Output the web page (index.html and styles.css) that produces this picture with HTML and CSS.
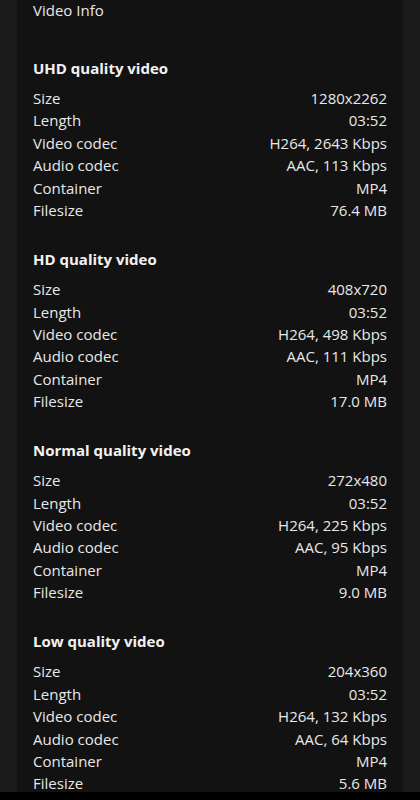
FILE: index.html
```html
<!DOCTYPE html>
<html lang="en">
<head>
<meta charset="utf-8">
<title>Video Info</title>
<link rel="stylesheet" href="styles.css">
</head>
<body>
<div class="page">
  <main class="panel">
    <div class="title">Video Info</div>

    <section class="group">
      <h2 class="heading">UHD quality video</h2>
      <dl class="rows">
        <dt>Size</dt><dd>1280x2262</dd>
        <dt>Length</dt><dd>03:52</dd>
        <dt>Video codec</dt><dd>H264, 2643 Kbps</dd>
        <dt>Audio codec</dt><dd>AAC, 113 Kbps</dd>
        <dt>Container</dt><dd>MP4</dd>
        <dt>Filesize</dt><dd>76.4 MB</dd>
      </dl>
    </section>

    <section class="group">
      <h2 class="heading">HD quality video</h2>
      <dl class="rows">
        <dt>Size</dt><dd>408x720</dd>
        <dt>Length</dt><dd>03:52</dd>
        <dt>Video codec</dt><dd>H264, 498 Kbps</dd>
        <dt>Audio codec</dt><dd>AAC, 111 Kbps</dd>
        <dt>Container</dt><dd>MP4</dd>
        <dt>Filesize</dt><dd>17.0 MB</dd>
      </dl>
    </section>

    <section class="group">
      <h2 class="heading">Normal quality video</h2>
      <dl class="rows">
        <dt>Size</dt><dd>272x480</dd>
        <dt>Length</dt><dd>03:52</dd>
        <dt>Video codec</dt><dd>H264, 225 Kbps</dd>
        <dt>Audio codec</dt><dd>AAC, 95 Kbps</dd>
        <dt>Container</dt><dd>MP4</dd>
        <dt>Filesize</dt><dd>9.0 MB</dd>
      </dl>
    </section>

    <section class="group">
      <h2 class="heading">Low quality video</h2>
      <dl class="rows">
        <dt>Size</dt><dd>204x360</dd>
        <dt>Length</dt><dd>03:52</dd>
        <dt>Video codec</dt><dd>H264, 132 Kbps</dd>
        <dt>Audio codec</dt><dd>AAC, 64 Kbps</dd>
        <dt>Container</dt><dd>MP4</dd>
        <dt>Filesize</dt><dd>5.6 MB</dd>
      </dl>
    </section>
  </main>
</div>
<div class="navbar"></div>
</body>
</html>
```
FILE: styles.css
```css
html, body {
  margin: 0;
  padding: 0;
  background: #1b1b1b;
  height: 100%;
  overflow: hidden;
}

body {
  font-family: "Open Sans", "Noto Sans", sans-serif;
  font-size: 15px;
  color: #e8e8e8;
}

.page {
  padding: 0 17px;
}

.panel {
  background: #121212;
  padding: 0 16px 20px;
}

.title {
  line-height: 20px;
  margin-bottom: 36px;
  color: #e8e8e8;
}

.group {
  margin-bottom: 25.8px;
}

.heading {
  margin: 0 0 7px;
  font-size: 15px;
  font-weight: 700;
  line-height: 24px;
  color: #f2f2f2;
}

.rows {
  margin: 0;
  display: grid;
  grid-template-columns: 1fr auto;
  grid-auto-rows: 22.4px;
  line-height: 22.4px;
}

.rows dt,
.rows dd {
  margin: 0;
  white-space: nowrap;
}

.rows dd {
  text-align: right;
}

.navbar {
  position: fixed;
  left: 0;
  right: 0;
  bottom: 0;
  height: 8px;
  background: #000;
}
```
